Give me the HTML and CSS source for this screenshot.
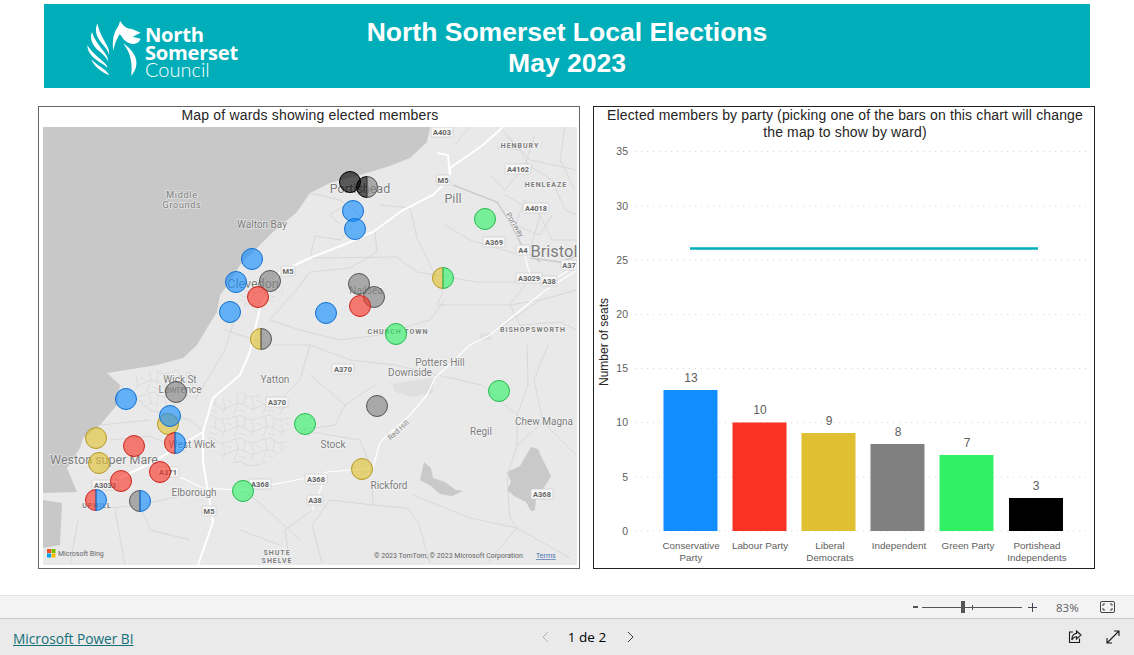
FILE: index.html
```html
<!DOCTYPE html>
<html lang="en">

<head>
  <meta charset="UTF-8">
  <meta name="viewport" content="width=device-width, initial-scale=1.0">
  <title>North Somerset Local Elections</title>
  <link rel="stylesheet" href="styles.css">
</head>

<body>
  <header class="banner">
    <div class="logo">
      <svg class="logo-mark" viewBox="0 0 192 198">
        <path d="M40 22C32 42 36 62 52 80C62 92 72 102 75 116C80 92 50 70 40 22Z" />
        <path d="M24 48C16 68 26 90 46 106C58 116 68 126 72 136C76 114 38 92 24 48Z" />
        <path d="M10 88C10 108 26 126 46 138C56 144 66 150 70 156C72 142 34 124 10 88Z" />
        <path d="M22 130C30 152 52 168 76 178C68 160 42 152 22 130Z" />
        <path d="M108 14C106 24 104 30 98 38C88 54 84 78 88 104C92 88 95 74 104 60C106 50 112 60 116 66C122 76 136 84 150 84C160 82 168 76 170 68L146 62L170 50L142 38C128 38 118 30 108 14Z" />
        <path d="M118 82C128 100 148 118 142 180C158 160 164 136 148 112C140 100 130 90 118 82Z" />
      </svg>
      <div class="logo-text">
        <span>North</span>
        <span>Somerset</span>
        <span class="logo-light">Council</span>
      </div>
    </div>
    <h1>North Somerset Local Elections<br>May 2023</h1>
  </header>

  <main class="panels">
    <section class="panel map-panel">
      <h2>Map of wards showing elected members</h2>
      <svg class="map" viewBox="43 127 534 438">
        <defs>
          <pattern id="streets" width="29" height="23" patternUnits="userSpaceOnUse">
            <path d="M0 3L9 1L17 6L29 4M4 2L6 12L2 23M13 4L12 14L20 18L29 15M0 14L7 12L12 14M20 6L22 18L19 23M7 19L14 21M24 9L29 11" />
          </pattern>
        </defs>

        <rect class="sea" x="43" y="127" width="534" height="438" />
        <path class="land" d="M430 127L427 142L410 158L387 167L360 175L330 183L310 193L297 212L273 232L257 248L240 265L230 282L220 295L217 312L207 328L197 345L183 358L157 365L107 373L120 385L117 405L100 425L83 438L80 448L67 468L77 492L43 493L43 500L62 503L60 545L43 548L43 565L577 565L577 127Z" />

        <path class="lake" d="M424 462L431 468L433 478L445 482L456 490L463 491L452 496L440 494L431 486L420 480Z" />
        <path class="lake" d="M531 447L538 449L541 456L548 470L551 476L545 486L536 498L535 510L531 511L526 502L514 496L507 490L511 482L507 472L520 466Z" />
        <path class="town-patch" d="M392 384L415 380L433 378L433 393L412 397L395 392Z" />
        <path class="town-patch" d="M480 334L492 333L491 340L480 340Z" />

        <path class="streets" d="M212 402L240 392L280 398L292 420L285 450L258 468L225 462L208 440Z" />
        <path class="streets" d="M130 378L160 368L192 372L196 396L170 408L140 402Z" />
        <path class="streets" d="M238 280L262 272L285 290L270 305L240 308Z" />

        <g class="roads">
          <path d="M437 375L482 385L517 415L517 445L507 478L510 518L517 528L487 563" />
          <path d="M527 345L528 385L517 415" />
          <path d="M543 422L578 457M517 445L543 422L534 380L548 345" />
          <path d="M413 495L470 518L517 528L570 558" />
          <path d="M372 485L373 505L407 508L418 522L430 563" />
          <path d="M410 208L417 238L443 292L437 305L510 305L540 300" />
          <path d="M310 258L397 257L417 272L477 282L517 282" />
          <path d="M375 232L377 252L350 268L310 272L296 290L270 320L300 330" />
          <path d="M310 345L350 360L395 365L437 375M310 345L300 380L278 402" />
          <path d="M300 330L340 340L380 335L430 320L445 300" />
          <path d="M373 505L330 500L312 525L322 563M300 540L262 505L243 490" />
          <path d="M90 510L140 505L185 495L203 488M70 565L78 520M115 510L125 565M140 505L150 530L190 540" />
          <path d="M290 565L285 530L312 510M240 530L280 545" />
          <path d="M120 385L150 410L190 420L203 432M100 425L150 420M110 440L150 436L186 452M100 470L130 455" />
          <path d="M225 330L270 345L310 345M235 318L225 350L195 400" />
          <path d="M340 200L360 215L340 240L315 236L310 258M340 200L310 193M380 205L410 208" />
          <path d="M340 190L365 196L385 186M345 205L330 215L340 225" />
          <path d="M497 147L520 150L528 165L552 180L565 210L577 215" />
          <path d="M490 175L505 190L525 165L535 135M505 195L540 215L552 240L577 240" />
          <path d="M525 200L515 225L540 235L552 215M565 127L560 160L575 190M520 150L505 135M540 215L530 250" />
          <path d="M500 127L530 160L577 170M577 290L540 300L490 335M525 285L510 305L520 325L560 322L577 330" />
          <path d="M445 225L470 240L520 255M470 127L455 145" />
          <path d="M300 430L335 425L345 405L375 385M300 430L360 440L372 470M345 405L310 375" />
        </g>
        <path class="river" d="M453 185L497 202L510 222L523 248L540 262" />
        <path class="river" d="M530 258L560 262L577 256" />

        <g class="motorway">
          <path d="M503 127L483 145L450 168L450 178L433 195L403 210L373 232L343 245L310 258L280 272L260 308L253 338L250 352L240 375L213 398L203 432L203 462L213 522L198 565" />
          <path d="M437 153L448 155L450 178" />
          <path d="M203 432L153 462L120 478" />
        </g>
        <g class="a-road">
          <path d="M180 477L203 488L243 490L307 478L327 472L373 468L380 442L410 415L427 395L435 378L470 345L490 335L543 292L577 270" />
          <path d="M327 472L317 498L312 510" />
          <path d="M523 248L530 275L550 282L577 265" />
        </g>

        <g class="label">
          <text x="182" y="198" class="spaced">Middle</text>
          <text x="182" y="208" class="spaced">Grounds</text>
          <text x="262" y="228">Walton Bay</text>
          <text x="253" y="288" class="big">Clevedon</text>
          <text x="360" y="193" class="big">Portishead</text>
          <text x="453" y="203" class="big">Pill</text>
          <text x="554" y="257" class="huge">Bristol</text>
          <text x="366" y="294">Nailsea</text>
          <text x="398" y="334" class="caps">CHURCH TOWN</text>
          <text x="533" y="332" class="caps">BISHOPSWORTH</text>
          <text x="520" y="148" class="caps">HENBURY</text>
          <text x="546" y="187" class="caps">HENLEAZE</text>
          <text x="440" y="366">Potters Hill</text>
          <text x="410" y="376">Downside</text>
          <text x="275" y="383">Yatton</text>
          <text x="180" y="383">Wick St</text>
          <text x="180" y="393">Lawrence</text>
          <text x="192" y="448">West Wick</text>
          <text x="104" y="464" class="big">Weston super Mare</text>
          <text x="194" y="496">Elborough</text>
          <text x="333" y="448">Stock</text>
          <text x="389" y="489">Rickford</text>
          <text x="481" y="435">Regil</text>
          <text x="544" y="425">Chew Magna</text>
          <text x="277" y="555" class="caps">SHUTE</text>
          <text x="277" y="563" class="caps">SHELVE</text>
          <text x="97" y="508" class="caps">UPHILL</text>
          <text class="tiny" transform="translate(400 432) rotate(-42)">Red Hill</text>
          <text class="tiny" transform="translate(513 226) rotate(58)">Portway</text>
        </g>

        <g class="shields">
          <g transform="translate(442 132)"><rect x="-11" y="-5" width="22" height="10" /><text y="3">A403</text></g>
          <g transform="translate(443 180)"><rect x="-7" y="-5" width="14" height="10" /><text y="3">M5</text></g>
          <g transform="translate(518 169)"><rect x="-13" y="-5" width="26" height="10" /><text y="3">A4162</text></g>
          <g transform="translate(536 208)"><rect x="-13" y="-5" width="26" height="10" /><text y="3">A4018</text></g>
          <g transform="translate(494 242)"><rect x="-11" y="-5" width="22" height="10" /><text y="3">A369</text></g>
          <g transform="translate(523 250)"><rect x="-7" y="-5" width="14" height="10" /><text y="3">A4</text></g>
          <g transform="translate(529 278)"><rect x="-13" y="-5" width="26" height="10" /><text y="3">A3029</text></g>
          <g transform="translate(549 281)"><rect x="-8" y="-5" width="16" height="10" /><text y="3">A38</text></g>
          <g transform="translate(569 265)"><rect x="-8" y="-5" width="16" height="10" /><text y="3">A37</text></g>
          <g transform="translate(288 271)"><rect x="-7" y="-5" width="14" height="10" /><text y="3">M5</text></g>
          <g transform="translate(277 402)"><rect x="-11" y="-5" width="22" height="10" /><text y="3">A370</text></g>
          <g transform="translate(343 369)"><rect x="-11" y="-5" width="22" height="10" /><text y="3">A370</text></g>
          <g transform="translate(168 472)"><rect x="-11" y="-5" width="22" height="10" /><text y="3">A371</text></g>
          <g transform="translate(105 485)"><rect x="-13" y="-5" width="26" height="10" /><text y="3">A3033</text></g>
          <g transform="translate(209 511)"><rect x="-7" y="-5" width="14" height="10" /><text y="3">M5</text></g>
          <g transform="translate(260 484)"><rect x="-11" y="-5" width="22" height="10" /><text y="3">A368</text></g>
          <g transform="translate(316 479)"><rect x="-11" y="-5" width="22" height="10" /><text y="3">A368</text></g>
          <g transform="translate(315 500)"><rect x="-8" y="-5" width="16" height="10" /><text y="3">A38</text></g>
          <g transform="translate(542 494)"><rect x="-11" y="-5" width="22" height="10" /><text y="3">A368</text></g>
        </g>

        <g class="ms-logo">
          <rect x="47" y="549" width="4" height="4" fill="#f25022" />
          <rect x="51.500" y="549" width="4" height="4" fill="#7fba00" />
          <rect x="47" y="553.500" width="4" height="4" fill="#00a4ef" />
          <rect x="51.500" y="553.500" width="4" height="4" fill="#ffb900" />
        </g>
        <text x="58" y="556" class="credit">Microsoft Bing</text>
        <text x="374" y="558" class="credit">© 2023 TomTom, © 2023 Microsoft Corporation</text>
        <text x="536" y="558" class="credit terms">Terms</text>

        <circle class="mk black" cx="350" cy="182" r="10.500" />
        <g transform="translate(367 187)"><path class="mk black" d="M0-10.500A10.500 10.500 0 0 0 0 10.500Z" /><path class="mk grey" d="M0-10.500A10.500 10.500 0 0 1 0 10.500Z" /></g>
        <circle class="mk blue" cx="353" cy="211" r="10.500" />
        <circle class="mk blue" cx="355" cy="229" r="10.500" />
        <circle class="mk green" cx="485" cy="219" r="10.500" />
        <g transform="translate(443 278)"><path class="mk yellow" d="M0-10.500A10.500 10.500 0 0 0 0 10.500Z" /><path class="mk green" d="M0-10.500A10.500 10.500 0 0 1 0 10.500Z" /></g>
        <circle class="mk grey" cx="359" cy="284" r="10.500" />
        <circle class="mk grey" cx="374" cy="297" r="10.500" />
        <circle class="mk red" cx="360" cy="306" r="10.500" />
        <circle class="mk blue" cx="326" cy="313" r="10.500" />
        <circle class="mk green" cx="396" cy="334" r="10.500" />
        <circle class="mk blue" cx="252" cy="259" r="10.500" />
        <circle class="mk blue" cx="236" cy="282" r="10.500" />
        <circle class="mk grey" cx="270" cy="281" r="10.500" />
        <circle class="mk red" cx="258" cy="297" r="10.500" />
        <circle class="mk blue" cx="230" cy="312" r="10.500" />
        <g transform="translate(261 339)"><path class="mk yellow" d="M0-10.500A10.500 10.500 0 0 0 0 10.500Z" /><path class="mk grey" d="M0-10.500A10.500 10.500 0 0 1 0 10.500Z" /></g>
        <circle class="mk blue" cx="126" cy="399" r="10.500" />
        <circle class="mk grey" cx="176" cy="392" r="10.500" />
        <circle class="mk yellow" cx="168" cy="424" r="10.500" />
        <circle class="mk blue" cx="170" cy="416" r="10.500" />
        <g transform="translate(175 443)"><path class="mk red" d="M0-10.500A10.500 10.500 0 0 0 0 10.500Z" /><path class="mk blue" d="M0-10.500A10.500 10.500 0 0 1 0 10.500Z" /></g>
        <circle class="mk yellow" cx="96" cy="438" r="10.500" />
        <circle class="mk red" cx="134" cy="446" r="10.500" />
        <circle class="mk yellow" cx="99" cy="463" r="10.500" />
        <circle class="mk red" cx="160" cy="472" r="10.500" />
        <circle class="mk red" cx="121" cy="481" r="10.500" />
        <g transform="translate(96 500)"><path class="mk red" d="M0-10.500A10.500 10.500 0 0 0 0 10.500Z" /><path class="mk blue" d="M0-10.500A10.500 10.500 0 0 1 0 10.500Z" /></g>
        <g transform="translate(140 501)"><path class="mk grey" d="M0-10.500A10.500 10.500 0 0 0 0 10.500Z" /><path class="mk blue" d="M0-10.500A10.500 10.500 0 0 1 0 10.500Z" /></g>
        <circle class="mk green" cx="243" cy="491" r="10.500" />
        <circle class="mk green" cx="305" cy="424" r="10.500" />
        <circle class="mk grey" cx="377" cy="406" r="10.500" />
        <circle class="mk yellow" cx="362" cy="469" r="10.500" />
        <circle class="mk green" cx="499" cy="391" r="10.500" />
      </svg>
    </section>

    <section class="panel chart-panel">
      <h2>Elected members by party (picking one of the bars on this chart will change<br>the map to show by ward)</h2>
      <svg class="chart" viewBox="594 141 500 427">
        <g class="grid">
          <path d="M635 151.500H1088" />
          <path d="M635 206H1088" />
          <path d="M635 260H1088" />
          <path d="M635 314.500H1088" />
          <path d="M635 368.500H1088" />
          <path d="M635 422.500H1088" />
          <path d="M635 477H1088" />
          <path d="M635 531H1088" />
        </g>
        <g class="ticks">
          <text x="628" y="155">35</text>
          <text x="628" y="210">30</text>
          <text x="628" y="264">25</text>
          <text x="628" y="318">20</text>
          <text x="628" y="372">15</text>
          <text x="628" y="426">10</text>
          <text x="628" y="481">5</text>
          <text x="628" y="535">0</text>
        </g>
        <text class="axis-title" transform="translate(608 342) rotate(-90)">Number of seats</text>

        <rect x="663.500" y="390" width="54" height="141" fill="#118dff" />
        <rect x="732.500" y="422.500" width="54" height="108.500" fill="#f93224" />
        <rect x="801.500" y="433" width="54" height="98" fill="#e0c030" />
        <rect x="870.500" y="444" width="54" height="87" fill="#808080" />
        <rect x="939.500" y="455" width="54" height="76" fill="#30f066" />
        <rect x="1009" y="498" width="54" height="33" fill="#000000" />
        <path class="target" d="M690 248.500H1038" />

        <g class="values">
          <text x="691" y="382">13</text>
          <text x="760" y="414">10</text>
          <text x="829" y="425">9</text>
          <text x="898" y="436">8</text>
          <text x="967" y="447">7</text>
          <text x="1036" y="490">3</text>
        </g>
        <g class="cats">
          <text x="691" y="549">Conservative</text>
          <text x="691" y="561">Party</text>
          <text x="760" y="549">Labour Party</text>
          <text x="830" y="549">Liberal</text>
          <text x="830" y="561">Democrats</text>
          <text x="899" y="549">Independent</text>
          <text x="968" y="549">Green Party</text>
          <text x="1037" y="549">Portishead</text>
          <text x="1037" y="561">Independents</text>
        </g>
      </svg>
    </section>
  </main>

  <div class="zoom-bar">
    <span class="zoom-minus"></span>
    <div class="slider">
      <span class="slider-tick"></span>
      <span class="slider-thumb"></span>
    </div>
    <svg class="zoom-plus" viewBox="0 0 9 9">
      <path d="M0 4.500H9M4.500 0V9" />
    </svg>
    <span class="zoom-value">83%</span>
    <svg class="fit-icon" viewBox="0 0 15 12">
      <rect x="0.500" y="0.500" width="14" height="11" rx="1.500" />
      <path d="M3 5V3H5M10 3H12V5M12 7V9H10M5 9H3V7" />
    </svg>
  </div>

  <footer class="footer">
    <a class="pbi-link" href="#">Microsoft Power BI</a>
    <nav class="pager">
      <svg class="chev off" viewBox="0 0 7 12"><path d="M6 1L1 6L6 11" /></svg>
      <span>1 de 2</span>
      <svg class="chev next" viewBox="0 0 7 12"><path d="M1 1L6 6L1 11" /></svg>
    </nav>
    <div class="footer-icons">
      <svg class="foot-icon" viewBox="0 0 14 14">
        <path d="M5 2H1.500V12.500H11.500V8.500" />
        <path d="M8.500 1L13 5L8.500 9V6.800C6 6.800 4.800 8 3.800 10C3.800 6.500 5.500 3.800 8.500 3.400Z" />
      </svg>
      <svg class="foot-icon" viewBox="0 0 14 14">
        <path d="M1 13L13 1M8 1H13V6M1 8V13H6" />
      </svg>
    </div>
  </footer>
</body>

</html>
```

FILE: styles.css
```css
* {
  box-sizing: border-box;
}

html,
body {
  height: 100%;
}

body {
  margin: 0;
  display: flex;
  flex-direction: column;
  overflow: hidden;
  background-color: #fff;
  font-family: "Liberation Sans", Arial, sans-serif;
  color: #252423;
}

/* banner */

.banner {
  position: relative;
  flex: none;
  height: 84px;
  margin: 4px 44px 0;
  background-color: #00aeb9;
  display: flex;
  align-items: center;
}

.banner h1 {
  margin: 0;
  padding-top: 4px;
  width: 100%;
  font-size: 26.500px;
  line-height: 31px;
  font-weight: bold;
  text-align: center;
  color: #fff;
}

.logo {
  position: absolute;
  left: 40px;
  top: 12px;
  display: flex;
  color: #fff;
}

.logo-mark {
  width: 64px;
  height: 66px;
  fill: #fff;
  margin-right: -3px;
}

.logo-text {
  display: flex;
  flex-direction: column;
  margin-top: 10px;
  font-family: "Open Sans", sans-serif;
  font-size: 20.200px;
  font-weight: 700;
  line-height: 17.500px;
  letter-spacing: -0.300px;
}

.logo-light {
  font-family: Lato, sans-serif;
  font-weight: 300;
  font-size: 20px;
  letter-spacing: 0;
}

/* panels */

.panels {
  flex: 1;
  display: flex;
  gap: 13px;
  align-items: flex-start;
  padding: 18px 0 0 38px;
}

.panel {
  height: 463px;
  background-color: #fff;
}

.panel h2 {
  margin: 0;
  font-size: 14px;
  font-weight: normal;
  line-height: 17px;
  text-align: center;
  letter-spacing: 0.180px;
}

.map-panel {
  width: 542px;
  border: 1px solid #666;
  padding: 0 2px 3px 4px;
}

.map-panel h2 {
  height: 20px;
}

.map {
  display: block;
  width: 534px;
  height: 438px;
}

.chart-panel {
  width: 502px;
  border: 1px solid #222;
}

.chart-panel h2 {
  height: 34px;
  padding-left: 2px;
  letter-spacing: 0.140px;
}

.chart {
  display: block;
  width: 500px;
  height: 427px;
}

/* map layers */

.sea {
  fill: #c8c8c8;
}

.land {
  fill: #e9e9e9;
}

.lake {
  fill: #c9c9c9;
}

.town-patch {
  fill: #dfdfdf;
}

.streets {
  fill: url(#streets);
}

pattern path {
  fill: none;
  stroke: #d4d4d4;
  stroke-width: 0.600;
}

.roads path {
  fill: none;
  stroke: #d6d6d6;
  stroke-width: 0.900;
}

.river {
  fill: none;
  stroke: #cbcbcb;
  stroke-width: 1.500;
}

.motorway path {
  fill: none;
  stroke: #fff;
  stroke-width: 2;
}

.a-road path {
  fill: none;
  stroke: #fff;
  stroke-width: 1.200;
}

.label text {
  font-family: Roboto, sans-serif;
  font-size: 10px;
  text-anchor: middle;
  fill: #7c7c7c;
  stroke: rgba(255, 255, 255, 0.500);
  stroke-width: 1.500px;
  paint-order: stroke;
}

.label .spaced {
  font-size: 9px;
  letter-spacing: 0.700px;
}

.label .big {
  font-size: 12.500px;
}

.label .huge {
  font-size: 16.500px;
}

.label .caps {
  font-size: 7px;
  font-weight: 700;
  letter-spacing: 1px;
}

.label .tiny {
  font-size: 7.500px;
}

.shields rect {
  fill: #f6f6f6;
  stroke: #cfcfcf;
  stroke-width: 0.800;
  rx: 1.500px;
}

.shields text {
  font-family: Roboto, sans-serif;
  font-size: 7.500px;
  font-weight: 700;
  text-anchor: middle;
  fill: #666;
}

.credit {
  font-family: Roboto, sans-serif;
  font-size: 7px;
  fill: #666;
}

.credit.terms {
  fill: #4a6fb5;
  text-decoration: underline;
}

.mk {
  stroke-width: 1;
  fill-opacity: 0.620;
}

.mk.blue {
  fill: #118dff;
  stroke: #0f6fd0;
}

.mk.red {
  fill: #f93224;
  stroke: #c9261b;
}

.mk.yellow {
  fill: #e0c030;
  stroke: #b39a26;
}

.mk.grey {
  fill: #808080;
  stroke: #555;
}

.mk.green {
  fill: #30f066;
  stroke: #24bd50;
}

.mk.black {
  fill: #000;
  stroke: #000;
}

/* chart */

.grid path {
  stroke: #d4d4d4;
  stroke-width: 1;
  stroke-dasharray: 1 5;
}

.ticks text {
  font-size: 10.500px;
  text-anchor: end;
  fill: #605e5c;
}

.axis-title {
  font-size: 12px;
  text-anchor: middle;
  fill: #252423;
}

.target {
  stroke: #00aeb9;
  stroke-width: 2.500;
}

.values text {
  font-size: 12px;
  text-anchor: middle;
  fill: #605e5c;
}

.cats text {
  font-size: 9.800px;
  text-anchor: middle;
  fill: #605e5c;
}

/* bottom bars */

.zoom-bar {
  flex: none;
  height: 24px;
  display: flex;
  align-items: center;
  justify-content: flex-end;
  padding-right: 19px;
  background-color: #f3f3f3;
  border-top: 1px solid #e3e3e3;
  border-bottom: 1px solid #c8c8c8;
}

.zoom-minus {
  width: 5px;
  height: 2px;
  background-color: #555;
}

.slider {
  position: relative;
  width: 100px;
  height: 1px;
  margin: 0 6px 0 4px;
  background-color: #555;
}

.slider-thumb {
  position: absolute;
  left: 39px;
  top: -6px;
  width: 4px;
  height: 12px;
  background-color: #555;
}

.slider-tick {
  position: absolute;
  left: 50px;
  top: -2px;
  width: 1px;
  height: 5px;
  background-color: #555;
}

.zoom-plus {
  width: 9px;
  height: 9px;
  stroke: #445;
  stroke-width: 1;
}

.zoom-value {
  width: 22px;
  margin: 0 22px 0 19px;
  font-family: "Open Sans", sans-serif;
  font-size: 11.500px;
  color: #605e5c;
}

.fit-icon {
  width: 15px;
  height: 12px;
  fill: none;
  stroke: #444;
  stroke-width: 1;
}

.footer {
  position: relative;
  flex: none;
  height: 36px;
  display: flex;
  align-items: center;
  justify-content: center;
  padding-left: 42px;
  background-color: #eaeaea;
}

.pbi-link {
  position: absolute;
  left: 13px;
  top: 10px;
  font-family: "Open Sans", sans-serif;
  font-size: 13.700px;
  line-height: 19px;
  color: #136f78;
}

.pager {
  display: flex;
  align-items: center;
  gap: 19px;
  font-family: "Open Sans", sans-serif;
  font-size: 13.500px;
  color: #000;
}

.chev {
  width: 7px;
  height: 12px;
  fill: none;
  stroke: #3a3a3a;
  stroke-width: 1;
}

.chev.next {
  margin-left: 2px;
}

.chev.off {
  stroke: #b5b5b5;
}

.footer-icons {
  position: absolute;
  right: 14px;
  top: 11px;
  display: flex;
  gap: 24px;
}

.foot-icon {
  width: 14px;
  height: 14px;
  fill: none;
  stroke: #1a1a1a;
  stroke-width: 1.100;
}
```
